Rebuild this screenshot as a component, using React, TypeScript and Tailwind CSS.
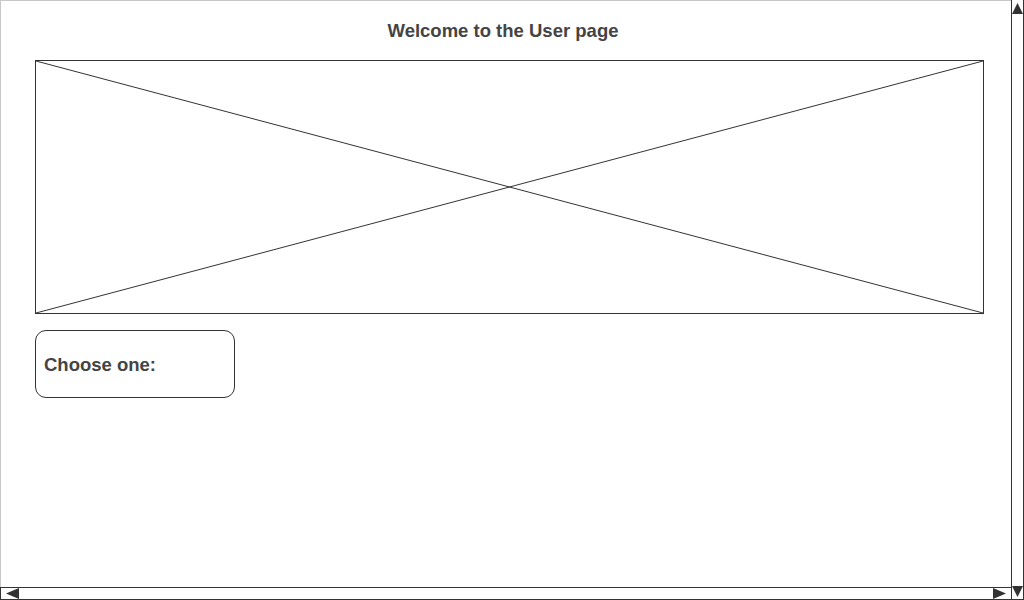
import React from "react";

export default function App() {
  return (
    <div className="w-[1024px] h-[600px] flex bg-white overflow-hidden" style={{ fontFamily: '"Liberation Sans", Arial, sans-serif' }}>
      <div className="flex-1 flex flex-col">
        <div className="h-[587px] border-t border-l border-[#c8c8c8] flex flex-col">
          <div className="pt-[18px] pr-[6px] h-[41px] text-center text-[18.5px] leading-[24px] font-bold text-[#444444]">
            Welcome to the User page
          </div>
          <div className="ml-[34px] mt-[18px] w-[949px] h-[254px] border border-[#333333]">
            <svg width="947" height="252" viewBox="0 0 947 252" className="block">
              <line x1="0" y1="0" x2="947" y2="252" stroke="#333333" strokeWidth="1" />
              <line x1="0" y1="252" x2="947" y2="0" stroke="#333333" strokeWidth="1" />
            </svg>
          </div>
          <div className="ml-[34px] mt-[16px] w-[200px] h-[68px] border border-[#333333] rounded-[11px] flex items-center pl-[8px] pt-[2px]">
            <span className="text-[18.5px] leading-[24px] font-bold text-[#444444]">Choose one:</span>
          </div>
        </div>
        <div className="h-[13px] border-t border-b border-l border-[#333333] flex items-center justify-between px-[5px]">
          <svg width="13" height="11" viewBox="0 0 13 11"><polygon points="0,5.5 13,0 13,11" fill="#333333" /></svg>
          <svg width="13" height="11" viewBox="0 0 13 11"><polygon points="13,5.5 0,0 0,11" fill="#333333" /></svg>
        </div>
      </div>
      <div className="w-[13px] h-[600px] border-l border-r border-b border-[#333333] flex flex-col items-center justify-between pt-[3px] pb-[2px]">
        <svg width="11" height="11" viewBox="0 0 11 11"><polygon points="5.5,0 0,11 11,11" fill="#333333" /></svg>
        <svg width="11" height="11" viewBox="0 0 11 11"><polygon points="5.5,11 0,0 11,0" fill="#333333" /></svg>
      </div>
    </div>
  );
}
